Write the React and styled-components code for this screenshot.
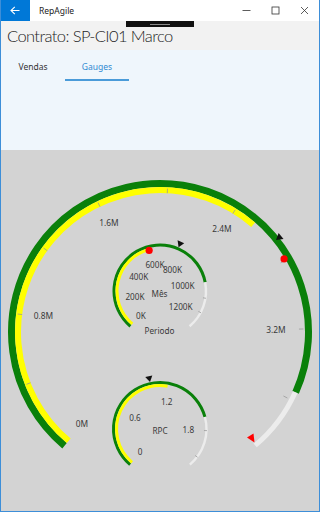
import React from "react";
import styled, { createGlobalStyle } from "styled-components";

const GlobalStyle = createGlobalStyle`
  html, body {
    margin: 0;
    padding: 0;
    background: #ffffff;
  }
  body {
    font-family: "Noto Sans", "Open Sans", sans-serif;
  }
`;

const Window = styled.div`
  position: relative;
  width: 320px;
  height: 512px;
  box-sizing: border-box;
  border: 1px solid #3d8ed8;
  border-top: none;
  display: flex;
  flex-direction: column;
  overflow: hidden;
  background: #ffffff;
`;

const TitleBar = styled.div`
  height: 21px;
  display: flex;
  align-items: center;
  background: #ffffff;
  flex-shrink: 0;
`;

const BackButton = styled.div`
  width: 30px;
  height: 21px;
  margin-left: -1px;
  background: #0078d7;
  display: flex;
  align-items: center;
  justify-content: center;
`;

const AppName = styled.span`
  margin-left: 9px;
  font-size: 8.5px;
  color: #222;
  flex: 1;
`;

const Controls = styled.div`
  display: flex;
  height: 21px;
`;

const ControlButton = styled.div`
  width: 29px;
  height: 21px;
  display: flex;
  align-items: center;
  justify-content: center;
`;

const TabletBar = styled.div`
  position: absolute;
  left: 125px;
  top: 21px;
  width: 68px;
  height: 6px;
  background: #111;
  display: flex;
  align-items: center;
  justify-content: center;
  &::after {
    content: "";
    width: 20px;
    height: 1px;
    background: #8a8a8a;
  }
`;

const Header = styled.div`
  height: 29px;
  background: #f2f2f2;
  display: flex;
  align-items: center;
  padding-left: 6px;
  flex-shrink: 0;
`;

const Title = styled.h1`
  margin: 0;
  font-family: Lato, "Noto Sans", sans-serif;
  font-size: 16.5px;
  font-weight: 300;
  letter-spacing: -0.6px;
  color: #1e1e1e;
`;

const Pivot = styled.div`
  height: 100px;
  background: #eff6fc;
  flex-shrink: 0;
`;

const TabRow = styled.div`
  display: flex;
  padding-top: 10px;
`;

const Tab = styled.div`
  width: 64px;
  height: 21px;
  box-sizing: border-box;
  text-align: center;
  font-size: 8.5px;
  line-height: 14px;
  color: ${(p) => (p.$active ? "#2f8ad2" : "#333")};
  border-bottom: 2px solid ${(p) => (p.$active ? "#4a9bd9" : "transparent")};
`;

const GaugePanel = styled.div`
  flex: 1;
  background: #d3d3d3;
`;

const GaugeSvg = styled.svg`
  display: block;
  width: 318px;
  height: 360px;
  font-family: "Noto Sans", "Open Sans", sans-serif;
`;

const GREEN = "#0a800a";
const YELLOW = "#ffff00";
const TRACK = "#ececec";
const RED = "#ff0000";

function polar(cx, cy, r, deg) {
  const a = (deg * Math.PI) / 180;
  return [cx + r * Math.sin(a), cy - r * Math.cos(a)];
}

function arcPath(cx, cy, r, a1, a2) {
  const [x1, y1] = polar(cx, cy, r, a1);
  const [x2, y2] = polar(cx, cy, r, a2);
  const large = a2 - a1 > 180 ? 1 : 0;
  return `M ${x1} ${y1} A ${r} ${r} 0 ${large} 1 ${x2} ${y2}`;
}

function Arc({ cx, cy, r, from, to, color, width }) {
  return (
    <path
      d={arcPath(cx, cy, r, from, to)}
      fill="none"
      stroke={color}
      strokeWidth={width}
    />
  );
}

function Ticks({ cx, cy, r1, r2, angles }) {
  return angles.map((a) => {
    const [x1, y1] = polar(cx, cy, r1, a);
    const [x2, y2] = polar(cx, cy, r2, a);
    return (
      <line key={a} x1={x1} y1={y1} x2={x2} y2={y2} stroke="#9a9a9a" strokeWidth="0.8" />
    );
  });
}

// triangle pointing toward the centre, tip at radius r
function Pointer({ cx, cy, r, angle, size, color }) {
  const [x, y] = polar(cx, cy, r, angle);
  return (
    <polygon
      points={`0,0 ${-size * 0.6},${-size} ${size * 0.6},${-size}`}
      fill={color}
      transform={`translate(${x} ${y}) rotate(${angle})`}
    />
  );
}

function Dot({ cx, cy, r, angle, color }) {
  const [x, y] = polar(cx, cy, r, angle);
  return <circle cx={x} cy={y} r="3.6" fill={color} />;
}

function Label({ x, y, children, size = 8.2 }) {
  return (
    <text x={x} y={y} fontSize={size} fill="#3a3a3a" textAnchor="middle" dominantBaseline="central">
      {children}
    </text>
  );
}

const outerLabels = [
  ["0M", 82, 423],
  ["0.8M", 43.5, 315],
  ["1.6M", 109, 222],
  ["2.4M", 222, 228],
  ["3.2M", 276, 329],
];

const midLabels = [
  ["0K", 141, 315.7],
  ["200K", 135, 296.7],
  ["400K", 138.7, 276.7],
  ["600K", 155, 264.3],
  ["800K", 172.5, 269.3],
  ["1000K", 182.7, 285.7],
  ["1200K", 180.7, 306.7],
];

const lowLabels = [
  ["0", 140, 451.7],
  ["0.6", 135, 417.3],
  ["1.2", 166.7, 401.7],
  ["1.8", 188.3, 429.3],
];

function OuterGauge() {
  const cx = 160;
  const cy = 332;
  return (
    <g>
      <Arc cx={cx} cy={cy} r={148.5} from={-140} to={114} color={GREEN} width={7} />
      <Arc cx={cx} cy={cy} r={148} from={114} to={140} color={TRACK} width={5} />
      <Arc cx={cx} cy={cy} r={142} from={-140} to={41} color={YELLOW} width={6} />
      <Ticks
        cx={cx}
        cy={cy}
        r1={139}
        r2={143.5}
        angles={[-111.4, -82.8, -54.2, -25.6, 3, 31.6, 60.2, 88.8, 117.4]}
      />
      <Pointer cx={cx} cy={cy} r={148} angle={51.6} size={6.5} color="#111" />
      <Dot cx={cx} cy={cy} r={144} angle={59.5} color={RED} />
      <polygon points="247,437.5 253.5,433.5 254.5,442.5" fill={RED} />
      {outerLabels.map(([t, x, y]) => (
        <Label key={t} x={x} y={y} size={8.4}>
          {t}
        </Label>
      ))}
    </g>
  );
}

function MidGauge() {
  const cx = 160;
  const cy = 291;
  return (
    <g>
      <Arc cx={cx} cy={cy} r={46} from={-140} to={79} color={GREEN} width={3} />
      <Arc cx={cx} cy={cy} r={46} from={79} to={140} color={TRACK} width={2.4} />
      <Arc cx={cx} cy={cy} r={43} from={-140} to={-15} color={YELLOW} width={3} />
      <Ticks cx={cx} cy={cy} r1={43.5} r2={46.5} angles={[99, 118]} />
      <Pointer cx={cx} cy={cy} r={47.5} angle={23} size={6} color="#111" />
      <Dot cx={cx} cy={cy} r={42} angle={-15} color={RED} />
      {midLabels.map(([t, x, y]) => (
        <Label key={t} x={x} y={y}>
          {t}
        </Label>
      ))}
      <Label x={159.5} y={293.3}>Mês</Label>
      <Label x={159.5} y={330.7}>Periodo</Label>
    </g>
  );
}

function LowGauge() {
  const cx = 160;
  const cy = 429;
  return (
    <g>
      <Arc cx={cx} cy={cy} r={46.5} from={-140} to={75} color={GREEN} width={3} />
      <Arc cx={cx} cy={cy} r={46.5} from={75} to={140} color={TRACK} width={2.4} />
      <Arc cx={cx} cy={cy} r={43.5} from={-140} to={10} color={YELLOW} width={3} />
      <Ticks cx={cx} cy={cy} r1={44} r2={47} angles={[92, 127]} />
      <Pointer cx={cx} cy={cy} r={48} angle={-12} size={6} color="#111" />
      {lowLabels.map(([t, x, y]) => (
        <Label key={t} x={x} y={y}>
          {t}
        </Label>
      ))}
      <Label x={160} y={430}>RPC</Label>
    </g>
  );
}

function BackArrow() {
  return (
    <svg width="10" height="9" viewBox="0 0 10 9">
      <path d="M9.5 4.5H1.2M4.8 0.8L1 4.5l3.8 3.7" fill="none" stroke="#fff" strokeWidth="1.1" />
    </svg>
  );
}

function MinIcon() {
  return (
    <svg width="9" height="9" viewBox="0 0 9 9">
      <path d="M0.5 4.5h8" stroke="#333" strokeWidth="0.8" />
    </svg>
  );
}

function MaxIcon() {
  return (
    <svg width="9" height="9" viewBox="0 0 9 9">
      <rect x="1" y="1" width="7" height="7" fill="none" stroke="#333" strokeWidth="0.8" />
    </svg>
  );
}

function CloseIcon() {
  return (
    <svg width="9" height="9" viewBox="0 0 9 9">
      <path d="M1 1l7 7M8 1l-7 7" stroke="#333" strokeWidth="0.8" />
    </svg>
  );
}

export default function App() {
  return (
    <>
      <GlobalStyle />
      <Window>
        <TitleBar>
          <BackButton>
            <BackArrow />
          </BackButton>
          <AppName>RepAgile</AppName>
          <Controls>
            <ControlButton>
              <MinIcon />
            </ControlButton>
            <ControlButton>
              <MaxIcon />
            </ControlButton>
            <ControlButton>
              <CloseIcon />
            </ControlButton>
          </Controls>
        </TitleBar>
        <TabletBar />
        <Header>
          <Title>Contrato: SP-CI01 Marco</Title>
        </Header>
        <Pivot>
          <TabRow>
            <Tab>Vendas</Tab>
            <Tab $active>Gauges</Tab>
          </TabRow>
        </Pivot>
        <GaugePanel>
          <GaugeSvg viewBox="1 150 318 360">
            <OuterGauge />
            <MidGauge />
            <LowGauge />
          </GaugeSvg>
        </GaugePanel>
      </Window>
    </>
  );
}
